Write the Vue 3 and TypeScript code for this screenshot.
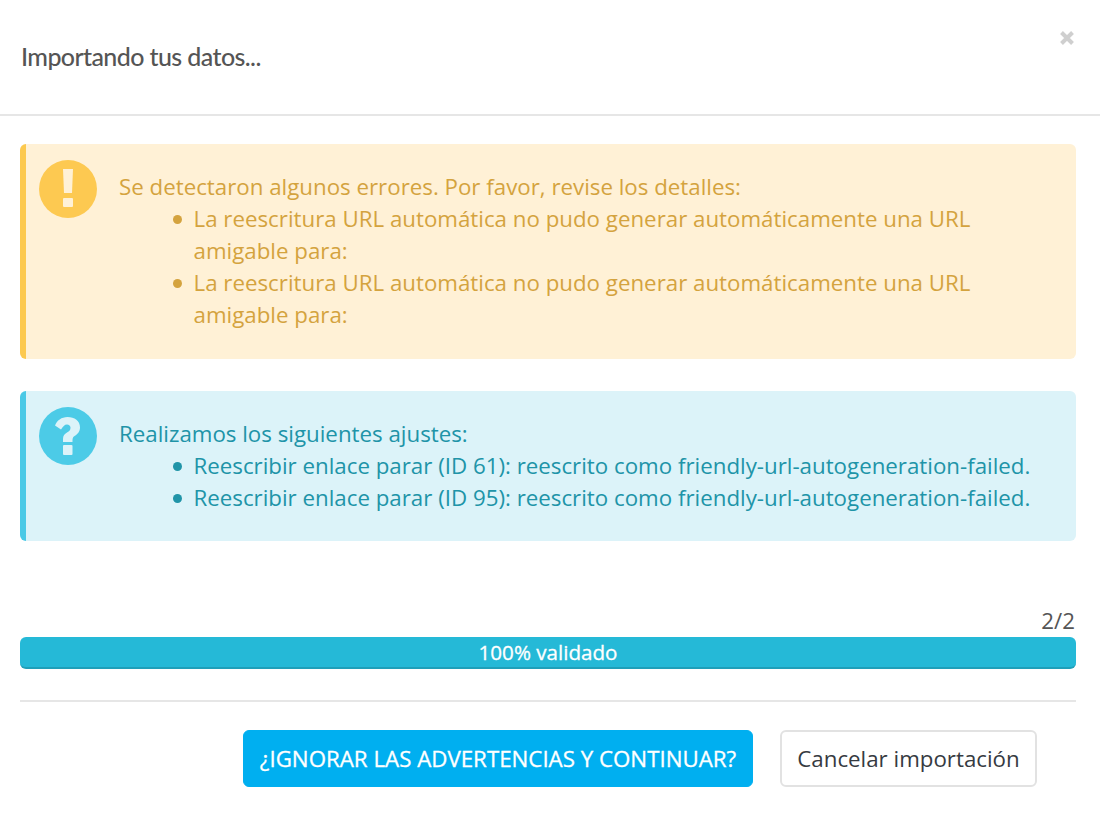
<script setup lang="ts">
interface Notice {
  kind: string
  heading: string
  items: string[]
}
const notices: Notice[] = [
  {
    kind: 'warning',
    heading: 'Se detectaron algunos errores. Por favor, revise los detalles:',
    items: [
      'La reescritura URL automática no pudo generar automáticamente una URL amigable para:',
      'La reescritura URL automática no pudo generar automáticamente una URL amigable para:',
    ],
  },
  {
    kind: 'info',
    heading: 'Realizamos los siguientes ajustes:',
    items: [
      'Reescribir enlace parar (ID 61): reescrito como friendly-url-autogeneration-failed.',
      'Reescribir enlace parar (ID 95): reescrito como friendly-url-autogeneration-failed.',
    ],
  },
]
</script>

<template>
  <div class="modal">
    <header class="head">
      <h1 class="title">Importando tus datos...</h1>
      <svg class="close" viewBox="0 0 16 16" aria-label="Cerrar">
        <path d="M2.500 2.500 L13.500 13.500 M13.500 2.500 L2.500 13.500" stroke="#cfcfcf" stroke-width="4" fill="none" />
      </svg>
    </header>
    <main class="body">
      <section v-for="n in notices" :key="n.kind" class="alert" :class="n.kind">
        <svg class="icon" viewBox="0 0 58 58">
          <circle cx="29" cy="29" r="29" class="disc" />
          <template v-if="n.kind === 'warning'">
            <path d="M24 9 H34 L33 33 H25 Z" class="mark" />
            <rect x="24" y="38" width="10" height="9" rx="1" class="mark" />
          </template>
          <template v-else>
            <path
              d="M16 18.500 C18 13.500 22.500 10 28.500 10 C35.500 10 41 14 41 20.500 C41 25 38 27.500 35.500 29 C34 30 33.500 31 33.500 35 H24 V32 C24 28.500 25.500 27 28 25.500 C30.500 24 31.500 23 31.500 20.500 C31.500 19 30 17.500 28 17.500 C25.500 17.500 24 19.500 22 22.500 Z"
              class="mark"
            />
            <rect x="24" y="38" width="9.500" height="10" rx="1" class="mark" />
          </template>
        </svg>
        <div class="copy">
          <p class="heading">{{ n.heading }}</p>
          <ul class="list">
            <li v-for="(item, i) in n.items" :key="i">{{ item }}</li>
          </ul>
        </div>
      </section>
      <div class="count">2/2</div>
      <div class="bar">100% validado</div>
      <div class="actions">
        <button class="btn primary">¿IGNORAR LAS ADVERTENCIAS Y CONTINUAR?</button>
        <button class="btn ghost">Cancelar importación</button>
      </div>
    </main>
  </div>
</template>

<style>
html,
body {
  margin: 0;
  background: #fff;
}
</style>

<style scoped>
.modal {
  width: 1100px;
  height: 832px;
  font-family: "Open Sans", sans-serif;
  font-size: 22.300px;
  line-height: 32px;
  color: #363a41;
  background: #fff;
}
.head {
  position: relative;
  height: 114px;
  border-bottom: 2px solid #e6e6e6;
  display: flex;
  align-items: center;
  padding-left: 21px;
}
.title {
  margin: 0 0 2px;
  font-family: Lato, sans-serif;
  font-weight: 500;
  font-size: 25px;
  letter-spacing: -0.6px;
  line-height: 32px;
  color: #555;
}
.close {
  position: absolute;
  top: 30px;
  right: 25px;
  width: 16px;
  height: 16px;
}
.body {
  padding: 28px 24px 0 20px;
}
.alert {
  display: flex;
  box-sizing: border-box;
  border-left: 6px solid;
  border-radius: 6px;
  padding: 16px 20px 0 13px;
  margin-bottom: 32px;
}
.warning {
  height: 215px;
  background: #fff1d6;
  border-color: #fcc94f;
  color: #d4a33e;
}
.info {
  height: 150px;
  background: #dcf3f9;
  border-color: #4bc9e6;
  color: #2094a8;
}
.icon {
  width: 58px;
  height: 58px;
  flex: none;
}
.warning .disc {
  fill: #fdc951;
}
.info .disc {
  fill: #4ccbe7;
}
.warning .mark {
  fill: #fff1d6;
}
.info .mark {
  fill: #dcf3f9;
}
.copy {
  margin-left: 22px;
  padding-top: 11px;
}
.heading {
  margin: 0;
}
.list {
  margin: 0;
  padding: 0 0 0 74.500px;
  list-style: none;
}
.list li {
  position: relative;
}
.list li::before {
  content: "";
  position: absolute;
  left: -21px;
  top: 12px;
  width: 9px;
  height: 9px;
  border-radius: 50%;
  background: currentColor;
}
.count {
  margin-top: 64px;
  padding-right: 1px;
  text-align: right;
  height: 32px;
  color: #555;
}
.bar {
  height: 32px;
  box-sizing: border-box;
  border-radius: 6px;
  border-bottom: 2px solid #1f9fb9;
  background: #25b9d7;
  color: #fff;
  font-size: 20.600px;
  -webkit-text-stroke: 0.3px #fff;
  line-height: 31px;
  text-align: center;
}
.actions {
  margin-top: 31px;
  border-top: 2px solid #e6e6e6;
  padding: 28px 39px 0 0;
  display: flex;
  justify-content: flex-end;
  gap: 27px;
}
.btn {
  height: 57px;
  box-sizing: border-box;
  border-radius: 6px;
  font-family: "Open Sans", sans-serif;
  font-size: 22.300px;
  padding: 0;
}
.primary {
  width: 510px;
  background: #00aff0;
  border: 1px solid #00aff0;
  color: #fff;
  -webkit-text-stroke: 0.3px #fff;
  white-space: nowrap;
}
.ghost {
  width: 257px;
  background: #fff;
  border: 2px solid #e2e2e2;
  color: #363a41;
}
</style>
